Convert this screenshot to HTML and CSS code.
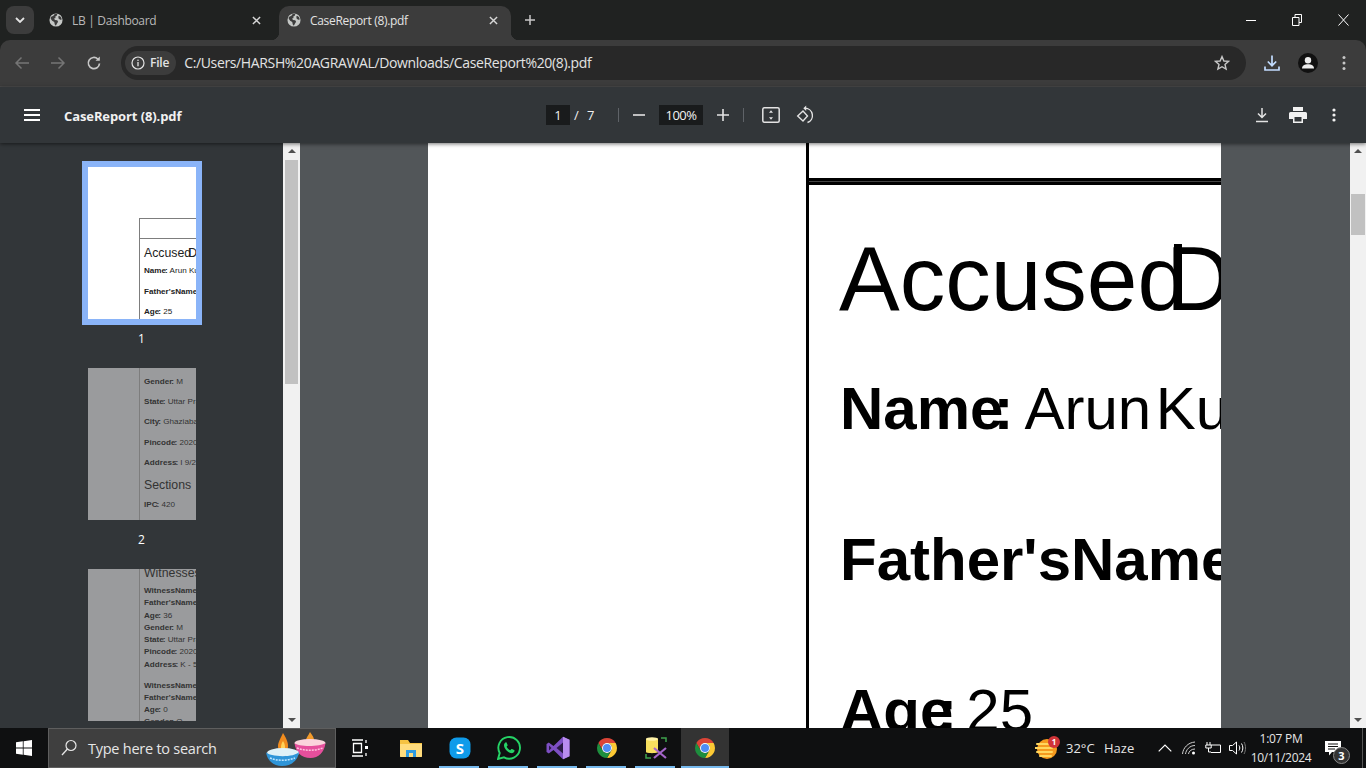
FILE: index.html
```html
<!DOCTYPE html>
<html lang="en">
<head>
<meta charset="utf-8">
<title>CaseReport (8).pdf</title>
<link rel="stylesheet" href="styles.css">
</head>
<body>
<svg class="defs" width="0" height="0" aria-hidden="true">
  <symbol id="globe" viewBox="0 0 16 16">
    <circle cx="8" cy="8" r="7.5" fill="#c4c7c5"/>
    <path d="M2 4.5 5 3.2 6.6 1 9.5 1.2 8.8 3 7 4.2 7.6 5.6 5.8 6.4 6.8 8 9.4 8.4 10.4 10 9 12.2 7.8 14.6 6.6 13 6 10.4 3.6 8.8 2 6.6Z" fill="#3c3c3c"/>
    <path d="M11.4 3.2 13.6 4.6 14.6 7.4 12.6 7.6 11 6 10.6 4.2Z" fill="#3c3c3c"/>
  </symbol>
  <symbol id="x" viewBox="0 0 10 10"><path d="M1 1 9 9M9 1 1 9" stroke="currentColor" stroke-width="1.6" fill="none"/></symbol>
  <symbol id="chrome" viewBox="0 0 48 48">
    <path d="M6.68 14A20 20 0 0 1 41.32 14L24 14A10 10 0 0 0 15.34 29Z" fill="#db4437"/>
    <path d="M41.32 14A20 20 0 0 1 24 44L32.66 29A10 10 0 0 0 24 14Z" fill="#fcc934"/>
    <path d="M24 44A20 20 0 0 1 6.68 14L15.34 29A10 10 0 0 0 32.66 29Z" fill="#1e8e3e"/>
    <circle cx="24" cy="24" r="10" fill="#fff"/><circle cx="24" cy="24" r="8" fill="#4e8df5"/>
  </symbol>
</svg>

<div class="tabstrip">
  <button class="tab-list"><svg width="10" height="6" viewBox="0 0 10 6"><path d="M1 1 5 5 9 1" stroke="#e3e3e3" stroke-width="1.8" fill="none"/></svg></button>
  <div class="tab">
    <svg class="fav" width="14" height="14"><use href="#globe"/></svg>
    <span class="tab-title">LB | Dashboard</span>
    <svg class="tab-x" width="9" height="9"><use href="#x"/></svg>
  </div>
  <div class="tab active">
    <svg class="fav" width="14" height="14"><use href="#globe"/></svg>
    <span class="tab-title">CaseReport (8).pdf</span>
    <svg class="tab-x" width="9" height="9"><use href="#x"/></svg>
  </div>
  <svg class="new-tab" width="12" height="12" viewBox="0 0 12 12"><path d="M6 1v10M1 6h10" stroke="#c7c7c7" stroke-width="1.5"/></svg>
  <div class="win-controls">
    <span class="win"><svg width="10" height="10" viewBox="0 0 10 10"><path d="M0 5.5h10" stroke="#fff"/></svg></span>
    <span class="win"><svg width="10" height="12" viewBox="0 0 10 12"><path d="M.5 3.5h6.500v8h-6.500zM3 3.500V.5h6.500v8H7" stroke="#fff" fill="none"/></svg></span>
    <span class="win"><svg width="11" height="12" viewBox="0 0 11 12"><path d="M.5.5 10.500 11.500M10.500.5 .5 11.500" stroke="#fff" fill="none"/></svg></span>
  </div>
</div>

<div class="toolbar">
  <span class="tbtn"><svg width="16" height="16" viewBox="0 0 16 16"><path d="M15 8H2M7.500 2.500 2 8l5.500 5.500" stroke="#757575" stroke-width="1.500" fill="none"/></svg></span>
  <span class="tbtn"><svg width="16" height="16" viewBox="0 0 16 16"><path d="M1 8h13M8.500 2.500 14 8l-5.500 5.500" stroke="#757575" stroke-width="1.500" fill="none"/></svg></span>
  <span class="tbtn"><svg width="16" height="16" viewBox="0 0 16 16"><path d="M13.500 8.500A5.600 5.600 0 1 1 11.800 4" stroke="#c7c7c7" stroke-width="1.700" fill="none"/><path d="M13.800 1.500v4.300H9.500z" fill="#c7c7c7"/></svg></span>
  <div class="omnibox">
    <span class="chip">
      <svg width="14" height="14" viewBox="0 0 14 14"><circle cx="7" cy="7" r="6" stroke="#e3e3e3" stroke-width="1.200" fill="none"/><path d="M7 6v4.200" stroke="#e3e3e3" stroke-width="1.300"/><circle cx="7" cy="4.200" r=".8" fill="#e3e3e3"/></svg>
      <b>File</b>
    </span>
    <span class="url">C:/Users/HARSH%20AGRAWAL/Downloads/CaseReport%20(8).pdf</span>
    <svg class="star" width="16" height="16" viewBox="0 0 16 16"><path d="M8 1.600 9.900 6l4.700.4-3.600 3.100 1.100 4.600L8 11.700l-4.100 2.400L5 9.500 1.400 6.400 6.100 6Z" stroke="#c7c7c7" stroke-width="1.400" fill="none"/></svg>
  </div>
  <span class="tbtn"><svg width="18" height="18" viewBox="0 0 18 18"><path d="M9 1.500v10M4.800 7.500 9 11.700l4.200-4.200M2 12.500v3.500h14v-3.500" stroke="#c2dcff" stroke-width="1.700" fill="none"/></svg></span>
  <span class="tbtn"><svg width="20" height="20" viewBox="0 0 20 20"><circle cx="10" cy="10" r="10" fill="#111"/><circle cx="10" cy="7.200" r="3.200" fill="#eee"/><path d="M4 15.500c0-3 2.800-4.300 6-4.300s6 1.300 6 4.300z" fill="#eee"/></svg></span>
  <span class="tbtn"><svg width="4" height="16" viewBox="0 0 4 16"><circle cx="2" cy="2.500" r="1.500" fill="#c7c7c7"/><circle cx="2" cy="8" r="1.500" fill="#c7c7c7"/><circle cx="2" cy="13.500" r="1.500" fill="#c7c7c7"/></svg></span>
</div>

<div class="pdfbar">
  <svg class="burger" width="16" height="12" viewBox="0 0 16 12"><path d="M0 1h16M0 6h16M0 11h16" stroke="#fff" stroke-width="2"/></svg>
  <span class="doc-title">CaseReport (8).pdf</span>
  <div class="pdf-center">
    <span class="page-no">1</span>
    <span class="slash">/</span>
    <span class="page-total">7</span>
    <span class="sep first"></span>
    <svg class="minus" width="12" height="2" viewBox="0 0 12 2"><path d="M0 1h12" stroke="#e3e3e3" stroke-width="1.600"/></svg>
    <span class="zoom-box">100%</span>
    <svg class="plus" width="12" height="12" viewBox="0 0 12 12"><path d="M6 0v12M0 6h12" stroke="#e3e3e3" stroke-width="1.600"/></svg>
    <span class="sep second"></span>
    <svg class="fit" width="18" height="16" viewBox="0 0 18 16"><rect x=".8" y=".8" width="16.400" height="14.400" rx="1.500" stroke="#e3e3e3" stroke-width="1.500" fill="none"/><path d="M9 3.200 11 5.700H7ZM9 12.800 11 10.300H7Z" fill="#e3e3e3"/></svg>
    <svg class="rotate" width="18" height="20" viewBox="0 0 18 20"><path d="M7 6 1.700 11 7 16 11.500 11Z" stroke="#e3e3e3" stroke-width="1.400" fill="none"/><path d="M9 3.300A7.300 7.300 0 0 1 11.500 17.500" stroke="#e3e3e3" stroke-width="1.400" fill="none"/><path d="M10.200 .5 7.300 3.300l2.900 2.800z" fill="#e3e3e3"/></svg>
  </div>
  <div class="pdf-right">
    <span class="pbtn"><svg width="14" height="16" viewBox="0 0 14 16"><path d="M7 1v9M3 6.500 7 10.500l4-4M1 14.500h12" stroke="#e3e3e3" stroke-width="1.500" fill="none"/></svg></span>
    <span class="pbtn"><svg width="18" height="16" viewBox="0 0 18 16"><path d="M4 0h10v4H4zM1.500 5h15A1.500 1.500 0 0 1 18 6.500V12h-4v4H4v-4H0V6.500A1.500 1.500 0 0 1 1.500 5Z" fill="#f1f1f1"/><path d="M5.500 10h7v4.500h-7z" fill="#323639"/></svg></span>
    <span class="pbtn"><svg width="4" height="14" viewBox="0 0 4 14"><circle cx="2" cy="2" r="1.600" fill="#f1f1f1"/><circle cx="2" cy="7" r="1.600" fill="#f1f1f1"/><circle cx="2" cy="12" r="1.600" fill="#f1f1f1"/></svg></span>
  </div>
</div>

<div class="workspace">
  <aside class="sidebar">
    <div class="thumb-item">
      <div class="thumb selected">
        <div class="mini">
          <div class="mini-spacer"></div>
          <div class="mini-col">
            <div class="mini-head"></div>
            <div class="mini-h1 first">Accused<span class="mini-d">D</span></div>
            <div class="mini-row wide"><b>Name<i>:</i></b> Arun Ku</div>
            <div class="mini-row wide"><b>Father'sName</b></div>
            <div class="mini-row wide"><b>Age<i>:</i></b> 25</div>
          </div>
        </div>
      </div>
      <span class="thumb-no">1</span>
    </div>
    <div class="thumb-item">
      <div class="thumb dim">
        <div class="mini page2">
          <div class="mini-col full">
            <div class="mini-row"><b>Gender<i>:</i></b> M</div>
            <div class="mini-row"><b>State<i>:</i></b> Uttar Pra</div>
            <div class="mini-row"><b>City<i>:</i></b> Ghaziaba</div>
            <div class="mini-row"><b>Pincode<i>:</i></b> 2020</div>
            <div class="mini-row"><b>Address<i>:</i></b> I 9/23</div>
            <div class="mini-h1 sections">Sections</div>
            <div class="mini-row"><b>IPC<i>:</i></b> 420</div>
            <div class="mini-row"><b>Witnesses</b></div>
          </div>
        </div>
      </div>
      <span class="thumb-no">2</span>
    </div>
    <div class="thumb-item">
      <div class="thumb dim">
        <div class="mini page3">
          <div class="mini-col full">
            <div class="mini-h1 witness">Witnesses</div>
            <div class="mini-row tight"><b>WitnessName</b></div>
            <div class="mini-row tight"><b>Father'sName</b></div>
            <div class="mini-row tight"><b>Age<i>:</i></b> 36</div>
            <div class="mini-row tight"><b>Gender<i>:</i></b> M</div>
            <div class="mini-row tight"><b>State<i>:</i></b> Uttar Pra</div>
            <div class="mini-row tight"><b>Pincode<i>:</i></b> 2020</div>
            <div class="mini-row tight"><b>Address<i>:</i></b> K - 56</div>
            <div class="mini-row tight gap"><b>WitnessName</b></div>
            <div class="mini-row tight"><b>Father'sName</b></div>
            <div class="mini-row tight"><b>Age<i>:</i></b> 0</div>
            <div class="mini-row tight"><b>Gender<i>:</i></b> O</div>
          </div>
        </div>
      </div>
    </div>
  </aside>
  <div class="scrollbar side">
    <span class="arrow up"></span>
    <div class="sb-track"><div class="sb-thumb side-thumb"></div></div>
    <span class="arrow down"></span>
  </div>
  <main class="viewer">
    <div class="page">
      <div class="page-blank"></div>
      <div class="page-col">
        <div class="page-head"></div>
        <div class="double"></div>
        <div class="h1">Accused<span class="h1-d">D</span></div>
        <div class="row"><b>Name<i>:</i></b><span class="val">Arun Ku</span></div>
        <div class="row"><b>Father'sName</b></div>
        <div class="row age"><b>Age<i>:</i></b><span class="val near">25</span></div>
      </div>
    </div>
  </main>
  <div class="scrollbar main-sb">
    <span class="arrow up"></span>
    <div class="sb-track"><div class="sb-thumb main-thumb"></div></div>
    <span class="arrow down"></span>
  </div>
</div>

<footer class="taskbar">
  <span class="start"><svg width="16" height="16" viewBox="0 0 16 16"><path d="M0 2.300 6.800 1.300V7.600H0ZM7.600 1.200 16 0V7.600H7.600ZM0 8.400H6.800V14.700L0 13.700ZM7.600 8.400H16V16L7.600 14.800Z" fill="#fff"/></svg></span>
  <div class="search">
    <svg width="16" height="18" viewBox="0 0 16 18"><circle cx="10" cy="6.500" r="5" stroke="#e6e6e6" stroke-width="1.200" fill="none"/><path d="M6.400 10 1 16" stroke="#e6e6e6" stroke-width="1.300"/></svg>
    <span class="search-text">Type here to search</span>
    <svg class="lamps" width="62" height="36" viewBox="0 0 62 36">
      <path d="M46 2c3 4 4 6 4 8 0 3-2 4-4 4s-4-1-4-4c0-2 2-4 4-8Z" fill="#f39b2b"/>
      <ellipse cx="46" cy="13" rx="15.500" ry="4" fill="#fbd4dc"/>
      <path d="M30.500 13c3 4 26 4 31 0-1 9-7 15-15 15-9 0-15-6-16-15Z" fill="#e64f9c"/>
      <path d="M33 18c8 3 18 3 26 0" stroke="#ffc3de" stroke-width="1.500" stroke-dasharray="2 1" fill="none"/>
      <path d="M19 3c4 6 5 10 5 13 0 4-2 6-5 6s-5-2-5-6c0-3 2-7 5-13Z" fill="#f28c1e"/>
      <path d="M19 11c2 3 2 5 2 7s-1 3-2 3-2-1-2-3 0-4 2-7Z" fill="#ffd35a"/>
      <ellipse cx="19" cy="23" rx="16" ry="5" fill="#dff1f7"/>
      <path d="M2 22c3 5 28 6 33 0-1 8-7 14-17 14C9 36 3 30 2 22Z" fill="#2f95d8"/>
      <path d="M6 28c7 3 17 3 25 0" stroke="#bfe6ff" stroke-width="1.500" stroke-dasharray="2 1" fill="none"/>
    </svg>
  </div>
  <span class="app taskview"><svg width="18" height="18" viewBox="0 0 18 18"><path d="M1 1h11M1 17h11M2.500 4.500h8v9h-8z" stroke="#fff" stroke-width="1.300" fill="none"/><path d="M15 1v3M15 14v3" stroke="#fff" stroke-width="1.300"/><rect x="14" y="7" width="3" height="3" fill="#fff"/></svg></span>
  <span class="app"><svg width="22" height="20" viewBox="0 0 22 20"><path d="M0 2h8l2 3h12v13a1 1 0 0 1-1 1H1a1 1 0 0 1-1-1Z" fill="#f5c242"/><path d="M0 6h22v12a1 1 0 0 1-1 1H1a1 1 0 0 1-1-1Z" fill="#ffdc7d"/><path d="M6 12h10v7h-3v-4H9v4H6Z" fill="#2f9be0"/></svg></span>
  <span class="app on"><svg width="22" height="22" viewBox="0 0 22 22"><rect x="0.500" y="0.500" width="21" height="21" rx="7" fill="#0f9bea"/><text x="11" y="16.500" class="skype">S</text></svg></span>
  <span class="app on"><svg width="24" height="24" viewBox="0 0 24 24"><path d="M1 23 2.700 17A10.800 10.800 0 1 1 7 21.300Z" stroke="#25d366" stroke-width="1.900" fill="none"/><path d="M8.500 6.500c-1.500 1-2 2.700-1 5 1.200 2.700 3.500 4.800 6 5.500 2 .5 3.500-.3 4-2 .1-.5 0-.8-.4-1l-2-1c-.4-.2-.7-.1-1 .2l-.8 1c-1.500-.5-3-1.900-3.700-3.500l.8-.9c.3-.3.3-.6.1-1l-.9-2c-.2-.5-.6-.6-1.100-.3Z" fill="#25d366"/></svg></span>
  <span class="app on"><svg width="24" height="24" viewBox="0 0 24 24"><path d="M17 .8 23.500 3.700v16.600L17 23.200 7.500 14 2.800 17.500.5 16V8l2.300-1.500L7.500 10Z" fill="#7d4fc4"/><path d="M17 6.500v11L10.500 12Z" fill="#2a1a45"/><path d="M3 9.500v5L5.500 12Z" fill="#2a1a45"/><path d="M17 .8 23.500 3.700v16.600L17 23.200Z" fill="#b98cf0"/></svg></span>
  <span class="app on"><svg width="24" height="24"><use href="#chrome"/></svg></span>
  <span class="app on"><svg width="24" height="24" viewBox="0 0 24 24"><path d="M2 18v4h5M17 2h5v4" stroke="#3fa34d" stroke-width="1.500" fill="none"/><path d="M2 3c0-1.500 12-1.500 12 0v13c0 1.500-12 1.500-12 0Z" fill="#f7df5e"/><ellipse cx="8" cy="3" rx="6" ry="1.800" fill="#fff3a8"/><path d="M10 12l12 10M22 12 10 22" stroke="#a565c9" stroke-width="2.200"/></svg></span>
  <span class="app on current"><svg width="24" height="24"><use href="#chrome"/></svg></span>

  <div class="tray">
    <svg class="weather" width="26" height="24" viewBox="0 0 26 24">
      <circle cx="12" cy="13" r="10" fill="#f59a1e"/>
      <path d="M2 8h14M0 12h17M2 16h15M5 20h11" stroke="#ffd75e" stroke-width="2" stroke-linecap="round"/>
      <circle cx="19" cy="6" r="6" fill="#d13438"/>
      <text x="19" y="9" class="wx-badge">1</text>
    </svg>
    <span class="temp">32°C</span>
    <span class="haze">Haze</span>
    <span class="tray-ico caret"><svg width="14" height="8" viewBox="0 0 14 8"><path d="M.7 7.300 7 1l6.300 6.300" stroke="#fff" stroke-width="1.200" fill="none"/></svg></span>
    <span class="tray-ico"><svg width="14" height="14" viewBox="0 0 14 14"><path d="M.5 13C1 7 6 1.500 13 1M3.500 13C4 9 7.500 4.500 13 4.500M6.500 13c.3-2.500 2.500-5 6.500-5" stroke="#cfcfcf" fill="none"/><circle cx="11.500" cy="12" r="1.500" fill="#fff"/></svg></span>
    <span class="tray-ico"><svg width="16" height="12" viewBox="0 0 16 12"><path d="M6 3h9.500v7.500H6" stroke="#fff" fill="none"/><path d="M2 0v3M5 0v3M.8 3h5.400v3H.8zM3.500 6v4H6" stroke="#fff" fill="none"/></svg></span>
    <span class="tray-ico"><svg width="17" height="14" viewBox="0 0 17 14"><path d="M.5 4.500h3L7.500 1v12L3.500 9.500h-3ZM10 4.500c1 1.500 1 3.500 0 5M12.500 2.500c1.800 2.500 1.800 6.500 0 9" stroke="#fff" fill="none"/><path d="M15 1c2 3.500 2 8.500 0 12" stroke="#777" fill="none"/></svg></span>
    <span class="clock"><span>1:07 PM</span><span>10/11/2024</span></span>
    <span class="notif">
      <svg width="16" height="15" viewBox="0 0 16 15"><path d="M0 0h16v11H7l-3 3.500V11H0Z" fill="#fff"/><path d="M3 3h10M3 5.500h10M3 8h7" stroke="#111"/></svg>
      <span class="notif-badge">3</span>
    </span>
    <span class="show-desktop"></span>
  </div>
</footer>
</body>
</html>
```
FILE: styles.css
```css
* { box-sizing: border-box; }
html, body { margin: 0; height: 100%; }
body {
  width: 1366px; height: 768px; overflow: hidden;
  display: flex; flex-direction: column;
  background: #202221;
  font-family: "Open Sans", "Liberation Sans", sans-serif;
  color: #e3e3e3;
}
.defs { position: absolute; }
svg { display: block; flex: none; }

/* tab strip */
.tabstrip { height: 40px; flex: none; display: flex; align-items: flex-end; background: #202221; }
.tab-list {
  width: 28px; height: 28px; margin: 0 3px 6px 6px; border: 0; padding: 0;
  background: #3c3c3c; border-radius: 8px;
  display: flex; align-items: center; justify-content: center;
}
.tab { width: 240px; height: 34px; display: flex; align-items: center; padding: 0 10px 6px 12px; position: relative; color: #b8b8b8; }
.tab.active { width: 232px; margin-left: 2px; padding: 0 8px 6px 8px; background: #3c3c3c; border-radius: 10px 10px 0 0; color: #e3e3e3; }
.tab.active::before, .tab.active::after { content: ""; position: absolute; bottom: 0; width: 8px; height: 8px; }
.tab.active::before { left: -8px; background: radial-gradient(circle at 0 0, transparent 8px, #3c3c3c 8.5px); }
.tab.active::after { right: -8px; background: radial-gradient(circle at 100% 0, transparent 8px, #3c3c3c 8.5px); }
.fav { margin-right: 9px; }
.tab-title { flex: 1; font-size: 12px; letter-spacing: -.32px; white-space: nowrap; }
.tab-x { color: #d6d6d6; margin-right: 6px; }
.tab.active .tab-x { margin-right: 5px; }
.new-tab { margin: 0 0 14px 13px; }
.win-controls { margin-left: auto; display: flex; align-self: flex-start; }
.win { width: 46px; height: 40px; display: flex; align-items: center; justify-content: center; }

/* toolbar */
.toolbar {
  height: 47px; flex: none; display: flex; align-items: center;
  padding: 0 4px; padding-bottom: 1px;
  background: #3c3c3c; border-radius: 10px 10px 0 0;
  border-bottom: 1px solid #4a4a4a;
}
.tbtn { width: 36px; height: 36px; flex: none; display: flex; align-items: center; justify-content: center; }
.omnibox {
  flex: 1; height: 34px; margin: 0 8px 0 9px; padding: 0 16px 0 4px;
  display: flex; align-items: center;
  background: #282828; border-radius: 17px;
}
.chip { height: 24px; padding: 0 7px 0 6px; display: flex; align-items: center; gap: 5px; background: #3c3c3c; border-radius: 12px; font-size: 12px; }
.chip b { font-weight: 600; letter-spacing: -.2px; }
.url { margin-left: 8px; flex: 1; font-size: 14px; color: #e3e3e3; letter-spacing: -.36px; white-space: nowrap; }

/* pdf bar */
.pdfbar {
  height: 56px; flex: none; display: flex; align-items: center;
  padding: 0 14px 0 24px; background: #323639;
  position: relative; z-index: 2;
  box-shadow: 0 1px 4px rgba(0, 0, 0, .55);
  color: #f1f1f1;
}
.burger { margin-right: 24px; }
.doc-title { width: 118px; margin-top: 1px; font-size: 13px; font-weight: 700; letter-spacing: -.1px; white-space: nowrap; color: #f1f1f1; }
.pdf-center { display: flex; align-items: center; margin-left: 364px; font-size: 13px; }
.page-no { width: 24px; height: 20px; background: #191b1c; text-align: center; line-height: 20px; font-size: 13px; }
.slash { margin-left: 4px; width: 6px; }
.page-total { margin-left: 7px; width: 8px; }
.sep { width: 1px; height: 14px; background: #5f6368; }
.sep.first { margin-left: 23px; }
.minus { margin-left: 14px; }
.zoom-box { width: 44px; height: 20px; margin-left: 14px; background: #191b1c; text-align: center; line-height: 20px; font-size: 13px; letter-spacing: -.5px; }
.plus { margin-left: 14px; }
.sep.second { margin-left: 14px; }
.fit { margin-left: 18px; }
.rotate { margin-left: 16px; }
.pdf-right { margin-left: auto; display: flex; }
.pbtn { width: 36px; height: 36px; display: flex; align-items: center; justify-content: center; }

/* workspace */
.workspace { flex: 1; min-height: 0; display: flex; overflow: hidden; }
.sidebar { width: 283px; flex: none; background: #323639; overflow: hidden; display: flex; flex-direction: column; align-items: center; padding-top: 24px; }
.thumb-item { height: 201px; flex: none; display: flex; flex-direction: column; align-items: center; }
.thumb { width: 108px; height: 152px; flex: none; overflow: hidden; background: #fff; }
.thumb.selected { box-sizing: content-box; outline: 6px solid #8ab4f8; }
.thumb.dim { background: #9a9b9d; color: #2e2f31; }
.thumb-no { margin-top: 12px; font-size: 12px; line-height: 16px; color: #fff; }
.mini { height: 100%; display: flex; color: #222; font-family: "Liberation Sans", sans-serif; }
.dim .mini { color: #333; }
.mini-spacer { width: 51px; flex: none; }
.mini-col { flex: 1; min-width: 0; border-left: 1px solid #7d7d7d; padding-left: 4.5px; white-space: nowrap; overflow: hidden; margin-top: 51px; border-top: 1px solid #7d7d7d; }
.mini-col.full { margin: 0 0 0 51px; border-top: 0; }
.mini-head { height: 20px; margin-left: -4.5px; border-bottom: 1px solid #7d7d7d; }
.mini-h1 { font-size: 12.3px; line-height: 14px; }
.mini-h1.first { margin-top: 7px; }
.mini-d { margin-left: -3px; }
.mini-h1.sections { margin-top: 5px; margin-bottom: 3px; }
.mini-h1.witness { margin-top: -3px; margin-bottom: 5px; }
.mini-row { font-size: 8.1px; line-height: 20.2px; }
.mini-row.wide { height: 20.5px; }
.mini-row.wide:nth-child(3) { margin-top: 1px; }
.mini-row b i { font-style: normal; margin-left: -1px; }
.mini-row.tight { line-height: 12.3px; }
.mini-row.gap { margin-top: 8.5px; }
.page2 .mini-col { padding-top: 4px; }
.thumb-item:nth-child(3) { height: auto; }

/* scrollbars */
.scrollbar { width: 17px; flex: none; background: #f1f1f1; display: flex; flex-direction: column; align-items: center; }
.scrollbar.main-sb { width: 16px; }
.sb-track { flex: 1; width: 100%; padding: 0 2px; }
.main-sb .sb-track { padding: 0 1px; }
.sb-thumb { background: #c1c1c1; }
.side-thumb { height: 224px; margin-top: 0; }
.main-thumb { height: 41px; margin-top: 34px; }
.arrow { width: 0; height: 0; flex: none; margin: 6px 0; border-left: 4px solid transparent; border-right: 4px solid transparent; }
.arrow.up { border-bottom: 4px solid #505050; margin-bottom: 7px; }
.arrow.down { border-top: 4px solid #505050; }

/* viewer */
.viewer { flex: 1; min-width: 0; background: #525659; overflow: hidden; display: flex; justify-content: center; }
.page { width: 793px; flex: none; margin-right: 1px; height: 100%; background: #fff; color: #000; display: flex; overflow: hidden; font-family: "Liberation Sans", sans-serif; }
.page-blank { width: 378px; flex: none; }
.page-col { flex: 1; min-width: 0; border-left: 3px solid #000; white-space: nowrap; overflow: hidden; }
.page-head { height: 35px; }
.double { height: 7px; border-top: 3px solid #000; border-bottom: 3px solid #000; background: #444; margin-bottom: 44px; }
.h1 { font-size: 91px; line-height: 100px; padding-left: 30px; }
.h1-d { margin-left: -22px; }
.row { font-size: 60px; line-height: 60px; padding-left: 31px; margin-top: 91px; }
.h1 + .row { margin-top: 50px; }
.row b i { font-style: normal; margin-left: -10px; }
.row.age b i { margin-left: -16px; }
.val { margin-left: 11px; word-spacing: -12px; }
.val.near { margin-left: 9px; }

/* taskbar */
.taskbar { height: 40px; flex: none; display: flex; background: #0f1011; position: relative; z-index: 3; }
.start { width: 48px; flex: none; display: flex; align-items: center; justify-content: center; }
.search {
  width: 288px; flex: none; display: flex; align-items: center; padding-left: 12px;
  background: #3f3f3f; border: 1px solid #5e5e5e; border-left-color: #5e5e5e;
  position: relative;
}
.search-text { margin-left: 11px; font-size: 14.500px; color: #e6e6e6; letter-spacing: -.25px; white-space: nowrap; }
.lamps { position: absolute; right: 9px; top: 1px; }
.app { width: 49px; flex: none; display: flex; align-items: center; justify-content: center; position: relative; }
.taskview { margin-left: 1px; padding-right: 4px; }
.app.on::after { content: ""; position: absolute; bottom: 0; left: 4px; right: 5px; height: 2px; background: #76b9ed; }
.app.current { width: 48px; margin-left: 1px; background: #333; }
.app.current::after { left: 0; right: 0; }
.skype { font: 700 15px "Open Sans", sans-serif; fill: #fff; text-anchor: middle; }
.tray { margin-left: auto; display: flex; align-items: center; font-size: 13px; color: #e6e6e6; }
.weather { margin-right: 5px; }
.temp { width: 38px; }
.haze { width: 49px; }
.tray-ico { width: 24px; display: flex; justify-content: center; }
.clock { width: 66px; margin-left: -1px; display: flex; flex-direction: column; align-items: center; font-size: 12px; line-height: 19px; letter-spacing: -.3px; }
.notif { width: 48px; height: 40px; padding-left: 11px; display: flex; align-items: center; position: relative; }
.notif-badge { position: absolute; left: 19px; top: 19px; width: 17px; height: 17px; border-radius: 50%; background: #333; border: 1px solid #888; font-size: 11px; font-weight: 700; line-height: 15px; text-align: center; color: #fff; }
.show-desktop { width: 4px; height: 40px; border-left: 1px solid #555; }
.wx-badge { font: 700 8px "Open Sans", sans-serif; fill: #fff; text-anchor: middle; }
```
